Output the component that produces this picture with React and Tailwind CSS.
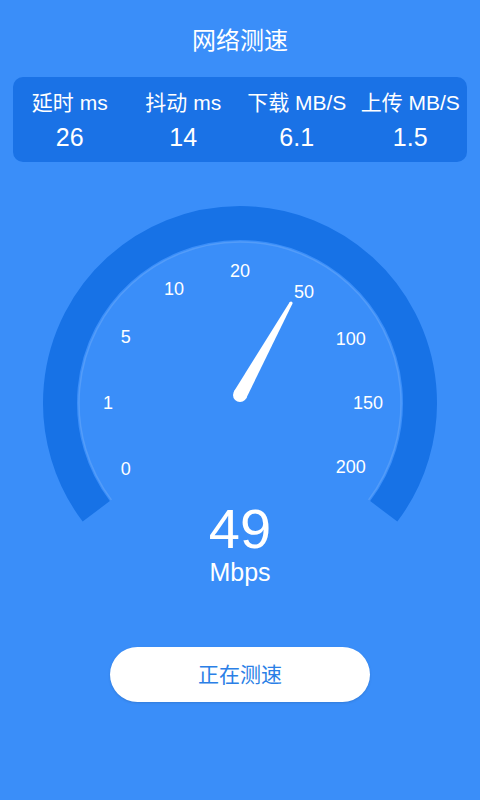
import React from 'react';

const STATS = [
  { label: '延时 ms', value: '26' },
  { label: '抖动 ms', value: '14' },
  { label: '下载 MB/S', value: '6.1' },
  { label: '上传 MB/S', value: '1.5' },
];

// gauge centre inside the svg (svg starts at page y=200)
const CX = 240;
const CY = 203;
const TICKS = ['0', '1', '5', '10', '20', '50', '100', '150', '200'];

function polar(r, deg) {
  const a = (deg * Math.PI) / 180;
  return [CX + r * Math.cos(a), CY - r * Math.sin(a)];
}

function arcPath(r, fromDeg, toDeg) {
  const [x1, y1] = polar(r, fromDeg);
  const [x2, y2] = polar(r, toDeg);
  return `M ${x1} ${y1} A ${r} ${r} 0 1 1 ${x2} ${y2}`;
}

function Gauge() {
  // needle: base (240,195) -> tip (291,103)
  const bx = 240, by = 195, tx = 291, ty = 103;
  const len = Math.hypot(tx - bx, ty - by);
  const nx = -(ty - by) / len, ny = (tx - bx) / len;
  const bw = 7, tw = 1.6;
  const pts = [
    [bx + nx * bw, by + ny * bw],
    [tx + nx * tw, ty + ny * tw],
    [tx - nx * tw, ty - ny * tw],
    [bx - nx * bw, by - ny * bw],
  ].map(p => p.join(',')).join(' ');

  return (
    <svg width="480" height="330" viewBox="0 0 480 330" className="block">
      <path d={arcPath(180, 217, -37)} fill="none" stroke="#1772e6" strokeWidth="34" />
      <path d={arcPath(161, 217, -37)} fill="none" stroke="rgba(255,255,255,0.13)" strokeWidth="1.5" />
      {TICKS.map((t, i) => {
        const deg = 210 - i * 30;
        const r = i > 4 ? 128 : 132;
        const [x, y] = polar(r, deg);
        return (
          <text key={t} x={x} y={y} fill="#ffffff" fontSize="18" textAnchor="middle"
                dominantBaseline="central" fontFamily="'Liberation Sans', Arial, sans-serif">
            {t}
          </text>
        );
      })}
      <polygon points={pts} fill="#ffffff" />
      <circle cx={bx} cy={by} r={bw} fill="#ffffff" />
      <circle cx={tx} cy={ty} r={tw} fill="#ffffff" />
    </svg>
  );
}

export default function App() {
  return (
    <div className="w-[480px] h-[800px] bg-[#3a8ef9] flex flex-col items-center overflow-hidden text-white font-['Liberation_Sans','Noto_Sans_CJK_SC',sans-serif]">
      <div className="mt-[27px] text-[24px] leading-[28px]">网络测速</div>

      {/* stats card */}
      <div className="mt-[22px] w-[454px] h-[85px] rounded-[10px] bg-[#1a72e6] grid grid-cols-4">
        {STATS.map(s => (
          <div key={s.label} className="flex flex-col items-center pt-[14px]">
            <div className="text-[21px] leading-[24px] whitespace-nowrap">{s.label}</div>
            <div className="mt-[7px] text-[25px] leading-[30px]">{s.value}</div>
          </div>
        ))}
      </div>

      <div className="mt-[38px]">
        <Gauge />
      </div>

      <div className="-mt-[25px] text-[56px] leading-[48px]">49</div>
      <div className="mt-[8px] text-[25px] leading-[22px]">Mbps</div>

      <button className="mt-[64px] w-[260px] h-[55px] rounded-full bg-white text-[#2b7fe6] text-[21px] shadow-sm">
        正在测速
      </button>
    </div>
  );
}
